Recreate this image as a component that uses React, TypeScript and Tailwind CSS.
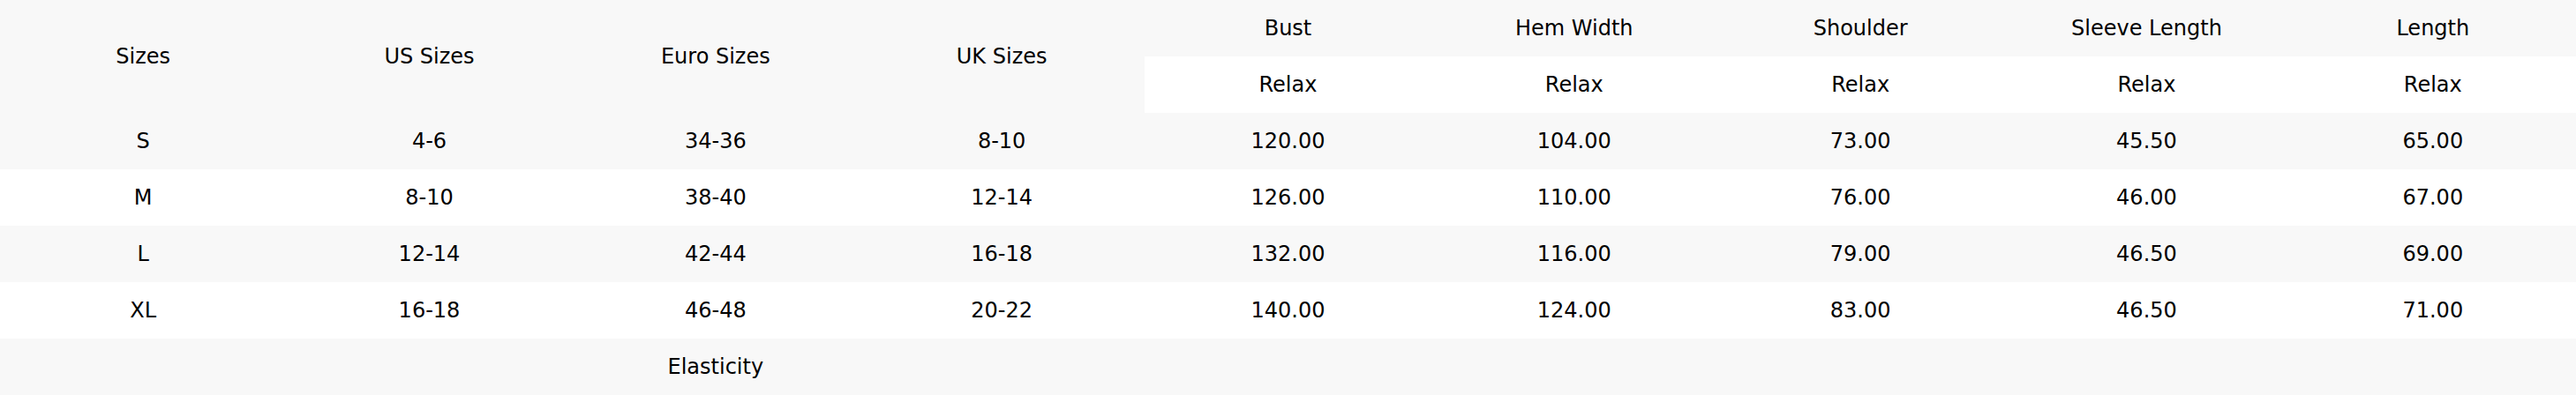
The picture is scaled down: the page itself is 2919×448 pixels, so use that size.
import React from "react";

const measures = ["Bust", "Hem Width", "Shoulder", "Sleeve Length", "Length"];

const rows = [
  { size: "S", us: "4-6", euro: "34-36", uk: "8-10", values: ["120.00", "104.00", "73.00", "45.50", "65.00"] },
  { size: "M", us: "8-10", euro: "38-40", uk: "12-14", values: ["126.00", "110.00", "76.00", "46.00", "67.00"] },
  { size: "L", us: "12-14", euro: "42-44", uk: "16-18", values: ["132.00", "116.00", "79.00", "46.50", "69.00"] },
  { size: "XL", us: "16-18", euro: "46-48", uk: "20-22", values: ["140.00", "124.00", "83.00", "46.50", "71.00"] },
];

const cell = "h-16 p-0 text-center align-middle font-normal";

const App = () => {
  return (
    <div className="w-[2919px] bg-white text-[24px] text-black font-['DejaVu_Sans',sans-serif]">
      <table className="w-full table-fixed border-collapse">
        <thead>
          <tr className="bg-[#f8f8f8]">
            <th rowSpan={2} className={cell}>Sizes</th>
            <th rowSpan={2} className={cell}>US Sizes</th>
            <th rowSpan={2} className={cell}>Euro Sizes</th>
            <th rowSpan={2} className={cell}>UK Sizes</th>
            {measures.map((m) => (
              <th key={m} className={cell}>{m}</th>
            ))}
          </tr>
          <tr className="bg-white">
            {measures.map((m) => (
              <th key={m} className={cell}>Relax</th>
            ))}
          </tr>
        </thead>
        <tbody>
          {rows.map((r, idx) => (
            <tr key={r.size} className={idx % 2 === 0 ? "bg-[#f8f8f8]" : "bg-white"}>
              <td className={cell}>{r.size}</td>
              <td className={cell}>{r.us}</td>
              <td className={cell}>{r.euro}</td>
              <td className={cell}>{r.uk}</td>
              {r.values.map((v, i) => (
                <td key={i} className={cell}>{v}</td>
              ))}
            </tr>
          ))}
          {/* elasticity row */}
          <tr className="bg-[#f8f8f8]">
            <td className={cell}></td>
            <td className={cell}></td>
            <td className={cell}>Elasticity</td>
            <td className={cell}></td>
            <td className={cell}></td>
            <td className={cell}></td>
            <td className={cell}></td>
            <td className={cell}></td>
            <td className={cell}></td>
          </tr>
        </tbody>
      </table>
    </div>
  );
};

export default App;
